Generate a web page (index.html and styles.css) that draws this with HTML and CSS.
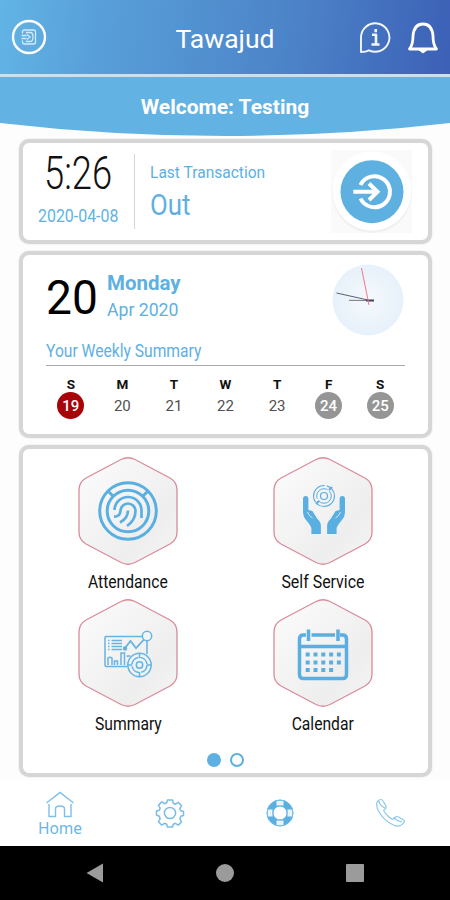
FILE: index.html
```
<!DOCTYPE html>
<html lang="en">
<head>
    <meta charset="UTF-8">
    <meta name="viewport" content="width=device-width, initial-scale=1.0">
    <title>Tawajud</title>
    <link rel="stylesheet" href="styles.css">
</head>
<body>
    <svg class="defs">
        <defs>
            <linearGradient id="hexFill" x1="0" y1="0" x2="1" y2="1">
                <stop offset="0" stop-color="#fcfcfc"/>
                <stop offset=".45" stop-color="#f3f3f3"/>
                <stop offset=".7" stop-color="#eeeeee"/>
                <stop offset="1" stop-color="#f5f5f5"/>
            </linearGradient>
            <symbol id="hex" viewBox="0 0 100 108">
                <path d="M43 2.5Q50 -1 57 2.5L92 21Q99 25 99 33V75Q99 83 92 87L57 105.5Q50 109 43 105.5L8 87Q1 83 1 75V33Q1 25 8 21Z" fill="url(#hexFill)" stroke="#d98c99" stroke-width="1.3"/>
            </symbol>
        </defs>
    </svg>
    <div class="app">
        <header class="header">
            <svg class="logout" width="36" height="36" viewBox="0 0 36 36" fill="none" stroke="#fff">
                <circle cx="18" cy="18" r="16" stroke-width="2.4"/>
                <path d="M11.500 14.500V13q0-2 2-2h9q2 0 2 2v10q0 2-2 2h-9q-2 0-2-2v-1.500M10.500 16.500h5M10.500 19.500h5M15.500 14.500v-1h4q2.500 0 2.500 4.500t-2.500 4.500h-4v-1M16 15.500l3 2.500-3 2.500" stroke="#d4eafa" stroke-width="1.3"/>
            </svg>
            <h1 class="title"><span>Tawajud</span></h1>
            <div class="header-icons">
                <svg width="32" height="33" viewBox="0 0 32 33" fill="none" stroke="#f2f6ff" stroke-width="1.900" stroke-linejoin="round">
                    <path d="M2 31V16.500A14.200 14.200 0 1 1 10 29.300Q7 31 2 31Z"/>
                    <path d="M13 13.800h4v9.500M12.500 23.500h8M16.700 8v3.200" stroke-width="2.600"/>
                </svg>
                <svg width="32" height="33" viewBox="0 0 32 33" fill="none" stroke="#fff" stroke-width="2.800" stroke-linejoin="round">
                    <path d="M2.500 28Q6 24 6 15Q7 3 16 3T26 15Q26 24 29.500 28Z"/>
                    <path d="M12 29h8l-4 3z" fill="#fff" stroke-width="1"/>
                </svg>
            </div>
        </header>
        <div class="welcome"><span>Welcome: Testing</span></div>

        <main>
            <section class="card transaction">
                <div class="time-box">
                    <div class="time"><span>5:26</span></div>
                    <div class="date"><span>2020-04-08</span></div>
                </div>
                <div class="last">
                    <div class="last-label"><span>Last Transaction</span></div>
                    <div class="last-value"><span>Out</span></div>
                </div>
                <svg class="out-icon" width="81" height="83" viewBox="0 0 81 83" fill="none">
                    <path d="M0 0H81V83H0Z" fill="#fafafa"/>
                    <circle cx="41" cy="43" r="40" fill="#f1f1f1"/>
                    <circle cx="41" cy="41" r="39.500" fill="#fff"/>
                    <circle cx="41" cy="41.700" r="31.500" fill="#5eb0e1"/>
                    <g stroke="#fff" stroke-width="4">
                        <path d="M29.500 35A15.500 15.500 0 1 1 29.500 48.500"/>
                        <path d="M22.300 41.700H46M38 33.500L46.500 41.700L38 50"/>
                    </g>
                </svg>
            </section>

            <section class="card week">
                <div class="week-top">
                    <div class="day-number"><span>20</span></div>
                    <div class="day">
                        <div class="day-name"><span>Monday</span></div>
                        <div class="month"><span>Apr 2020</span></div>
                    </div>
                    <svg class="clock" width="72" height="72" viewBox="0 0 72 72" fill="none">
                        <defs>
                            <radialGradient id="face">
                                <stop offset="0" stop-color="#f5f9fc"/>
                                <stop offset="1" stop-color="#e7f1fa"/>
                            </radialGradient>
                        </defs>
                        <circle cx="36" cy="36" r="35.500" fill="url(#face)"/>
                        <path d="M4.500 29L36 36" stroke="#59606c"/>
                        <path d="M17 36.300L42 36.500" stroke="#70757f"/>
                        <path d="M34 36.500H42" stroke="#404560" stroke-width="2"/>
                        <path d="M29.500 4L37 41" stroke="#f5788c"/>
                    </svg>
                </div>
                <h2 class="week-title"><span>Your Weekly Summary</span></h2>
                <ul class="days">
                    <li><b>S</b><i class="absent">19</i></li>
                    <li><b>M</b><i>20</i></li>
                    <li><b>T</b><i>21</i></li>
                    <li><b>W</b><i>22</i></li>
                    <li><b>T</b><i>23</i></li>
                    <li><b>F</b><i class="off">24</i></li>
                    <li><b>S</b><i class="off">25</i></li>
                </ul>
            </section>

            <section class="card menu">
                <div class="menu-grid">
                    <a class="item">
                        <svg width="100" height="108" viewBox="0 0 100 108" fill="none" stroke="#5aafe2" stroke-width="3">
                            <use href="#hex" width="100" height="108" stroke="none"/>
                            <circle cx="50" cy="54" r="28.300"/>
                            <circle cx="50" cy="54" r="20.800"/>
                            <path d="M30 34l5 5M70 34l-5 5"/>
                            <path d="M36.500 53A13.500 13.500 0 0 1 63.500 54V61M36 59.500Q42 60 42.500 54A7.500 7.500 0 0 1 57.500 54Q57.500 63 49 69M42 65.500Q50 61 50 53.500" stroke-width="2.700"/>
                        </svg>
                        <span>Attendance</span>
                    </a>
                    <a class="item">
                        <svg width="100" height="108" viewBox="0 0 100 108" fill="none" stroke="#5aafe2">
                            <use href="#hex" width="100" height="108" stroke="none"/>
                            <circle cx="51" cy="39" r="10.500" stroke-width="1.100" stroke-dasharray="24 2"/>
                            <circle cx="51" cy="39" r="7.300" stroke-dasharray="18 2"/>
                            <circle cx="51" cy="39" r="3.500" stroke-width="1.200"/>
                            <path d="M56 33l3-3M46 44l-3 3" stroke-width="2"/>
                            <g fill="#5aafe2" stroke="none">
                                <path d="M30 42q0-3 2.700-3t2.700 3v11l4 1 5 8q3.500 3 3.500 7v8h-9.500v-6q-1-3-5-7.500-3.400-4-3.400-8Z"/>
                                <path d="M72 42q0-3-2.700-3t-2.700 3v11l-4 1-5 8q-3.500 3-3.500 7v8h9.500v-6q1-3 5-7.500 3.400-4 3.400-8Z"/>
                            </g>
                            <path d="M34.500 55q1.500 4 5 6M67.500 55q-1.500 4-5 6" stroke="#d5e9f6"/>
                        </svg>
                        <span class="wide">Self Service</span>
                    </a>
                    <a class="item">
                        <svg width="100" height="108" viewBox="0 0 100 108" fill="none" stroke="#67b3e2" stroke-width="1.500">
                            <use href="#hex" width="100" height="108" stroke="none"/>
                            <path d="M64 37.500H28q-1 0-1 1V66q0 1.500 1.500 1.500H49M69 42v13"/>
                            <path d="M33.500 41.500H44M33.500 44.500H44M33.500 47.500H44M33.500 50.500H44M30 41.500h1.500M30 44.500h1.500M30 47.500h1.500M30 50.500h1.500"/>
                            <path d="M47 49l5.500-7 5.500 7L66.500 40" stroke-width="1.800"/>
                            <circle cx="47" cy="49.500" r="1.500" fill="#67b3e2"/>
                            <circle cx="69" cy="37" r="4.700" fill="#f1f5f8"/>
                            <path d="M30 66v-7q2-1.500 4 0v7M36.500 66v-4h3v4M43 66V54h3.500v12M49.500 58v-1h3"/>
                            <circle cx="61.500" cy="66" r="11.700" fill="#eef3f6"/>
                            <circle cx="61.500" cy="66" r="7.500" stroke-dasharray="10 2"/>
                            <circle cx="61.500" cy="66" r="3.200"/>
                            <path d="M61.500 54v5M61.500 73v5M50 66h4M69 66h4"/>
                        </svg>
                        <span>Summary</span>
                    </a>
                    <a class="item">
                        <svg width="100" height="108" viewBox="0 0 100 108" fill="none" stroke="#5aafe2">
                            <use href="#hex" width="100" height="108" stroke="none"/>
                            <path d="M33 36h-2.500q-4 0-4 4v35.500q0 4 4 4h39q4 0 4-4V40q0-4-4-4H67M38.500 36H62M26 47.500h48" stroke-width="3.500"/>
                            <path d="M35.500 30.500v11.500M65 30.500v11.500" stroke-width="3.500"/>
                            <path d="M32.700 55.500H68.700M32.700 63.500H68.700M32.700 71H60.700" stroke-width="4" stroke-dasharray="4 3.800"/>
                        </svg>
                        <span>Calendar</span>
                    </a>
                </div>
                <div class="dots"><i class="active"></i><i></i></div>
            </section>
        </main>

        <nav class="tabs">
            <a class="tab home">
                <svg width="30" height="28" viewBox="0 0 30 28" fill="none" stroke="#7dbfe9" stroke-width="1.400">
                    <path d="M1.500 12L15 1.500L28.500 12M4 13v12.500h6.500V18q0-3 4.500-3t4.500 3v7.500H26V13"/>
                </svg>
                <span>Home</span>
            </a>
            <a class="tab">
                <svg width="30" height="30" viewBox="0 0 30 30" fill="none" stroke="#79bce8" stroke-width="1.500" stroke-linejoin="round">
                    <path d="M12.500 2h5l.8 3.300 2.100.9 2.900-1.800 3.300 3.300-1.800 2.900.9 2.100 2.800.8v4l-2.800.8-.9 2.600 1.800 2.900-3.300 3.300-2.900-1.800-2.100.9-.8 2.800h-5l-.8-2.800-2.100-.9-2.900 1.800-3.300-3.300 1.800-2.900-.9-2.600L1.500 17v-4l2.800-.8.9-2.100-1.800-2.900 3.300-3.300 2.900 1.800 2.100-.9z"/>
                    <circle cx="15" cy="15" r="5.600"/>
                </svg>
            </a>
            <a class="tab">
                <svg width="30" height="30" viewBox="0 0 30 30" fill="none">
                    <circle cx="15" cy="15" r="10" stroke="#5aafe2" stroke-width="6.500"/>
                    <path d="M15 2.500v5M15 22.500v5M2.500 15h5M22.500 15h5" stroke="#e8f4fc" stroke-width="7"/>
                    <circle cx="15" cy="15" r="13" stroke="#72b9e6"/>
                    <circle cx="15" cy="15" r="7" stroke="#72b9e6"/>
                </svg>
            </a>
            <a class="tab">
                <svg width="30" height="30" viewBox="0 0 30 30" fill="none" stroke="#8cc8ed" stroke-width="1.200" stroke-linejoin="round">
                    <path d="M3 3Q6 0 8 3l3 5q1 2-2 4-1 1 4 6 4 4 5.500 3l2-2q1.500-1 3 0l5 3q2 1 0 3-4 5-10 2Q9 23 3.500 13 0 6 3 3ZM4 3q0 4 6 7M19 19q2 4 8 5"/>
                </svg>
            </a>
        </nav>

        <footer class="android">
            <svg width="20" height="22" viewBox="0 0 20 22"><path d="M18 1.500V20.500L1.500 11Z" fill="#9b9b9b"/></svg>
            <svg width="20" height="22" viewBox="0 0 20 22"><circle cx="10" cy="11" r="9" fill="#9b9b9b"/></svg>
            <svg width="20" height="22" viewBox="0 0 20 22"><rect x="1" y="2" width="18" height="18" rx="1" fill="#9b9b9b"/></svg>
        </footer>
    </div>
</body>
</html>
```

FILE: styles.css
```
*{
    margin: 0;
    padding: 0;
    box-sizing: border-box;
}
body{
    font-family: Roboto, "Liberation Sans", sans-serif;
    background: #fdfdfd;
    color: #111;
}
svg{
    display: block;
}
.defs{
    width: 0;
    height: 0;
    position: absolute;
}
.app{
    width: 450px;
    height: 900px;
    overflow: hidden;
    display: flex;
    flex-direction: column;
}
.app span{
    display: inline-block;
    white-space: nowrap;
    transform-origin: left center;
}
.header{
    height: 77px;
    display: grid;
    grid-template-columns: 100px 1fr 100px;
    align-items: center;
    padding-left: 11px;
    padding-right: 11px;
    background: linear-gradient(97deg, #62b4e5 0%, #589fd9 22%, #4c83c8 65%, #3c60b6 100%);
    border-bottom: 3px solid #c5e2f5;
}
.title{
    font-size: 26.5px;
    font-weight: 400;
    line-height: 30px;
    text-align: center;
    color: #fff;
    padding-top: 4px;
}
.header-icons{
    display: flex;
    gap: 16px;
    justify-content: flex-end;
}
.welcome{
    height: 59px;
    background: #62b3e4;
    clip-path: path('M0 0H450V46Q225 72 0 46Z');
    color: #fff;
    font-size: 21px;
    font-weight: 700;
    line-height: 61px;
    text-align: center;
}
main{
    padding: 3px 18px 0 19px;
    display: flex;
    flex-direction: column;
    gap: 7px;
}
.card{
    border: 4px solid #d6d6d6;
    border-radius: 10px;
    background: #fff;
    box-shadow: 0 0 2px #ddd;
}
.transaction{
    height: 105px;
    display: flex;
}
.time-box{
    width: 112px;
    height: 75px;
    margin-top: 11px;
    padding-left: 15px;
    border-right: 1px solid #d5d5d5;
}
.time{
    height: 46px;
    font-size: 46px;
    font-weight: 300;
    line-height: 39px;
    padding-left: 6px;
}
.time span{
    transform: scaleX(.79);
}
.date{
    font-size: 18px;
    line-height: 31px;
    color: #62b3e4;
}
.date span{
    transform: scaleX(.885);
}
.last{
    width: 181px;
    padding: 18px 0 0 15px;
    color: #5eb0e2;
}
.last-label{
    font-size: 17px;
    line-height: 23px;
}
.last-label span{
    transform: scaleX(.915);
}
.last-value{
    font-size: 29px;
    line-height: 42px;
}
.last-value span{
    transform: scaleX(.89);
}
.out-icon{
    margin: 7px 0 0 15px;
}
.week{
    height: 187px;
    padding: 9px 23px 0;
}
.week-top{
    height: 72px;
    display: flex;
}
.day-number{
    width: 61px;
    font-size: 48px;
    line-height: 67px;
    color: #000;
}
.day-number span{
    transform: scaleX(.96);
}
.day{
    width: 225px;
    padding-top: 6px;
    color: #5eb0e2;
}
.day-name{
    font-size: 20.5px;
    font-weight: 700;
    line-height: 27px;
}
.month{
    font-size: 18px;
    line-height: 26px;
}
.month span{
    transform: scaleX(.98);
}
.week-title{
    height: 30px;
    font-size: 18px;
    font-weight: 400;
    line-height: 30px;
    color: #5eb0e2;
    border-bottom: 1px solid #aaa;
}
.week-title span{
    transform: scaleX(.868);
}
.days{
    display: grid;
    grid-template-columns: repeat(7, 1fr);
    list-style: none;
    margin: 0 -1px;
    padding-top: 10px;
}
.days li{
    display: flex;
    flex-direction: column;
    align-items: center;
}
.days b{
    font-size: 13.5px;
    line-height: 16px;
}
.days i{
    width: 27px;
    height: 27px;
    border-radius: 50%;
    font-size: 15px;
    font-style: normal;
    line-height: 28px;
    text-align: center;
    color: #505050;
}
.days .absent, .days .off{
    color: #fff;
    font-weight: 500;
}
.days .absent{
    background: #a80309;
}
.days .off{
    background: #959595;
}
.menu{
    height: 332px;
    padding-top: 8px;
}
.menu-grid{
    width: 390px;
    margin: 0 auto;
    display: grid;
    grid-template-columns: 1fr 1fr;
    grid-auto-rows: 142px;
}
.item{
    display: flex;
    flex-direction: column;
    align-items: center;
    font-size: 18px;
    line-height: 33px;
}
.item span{
    transform: scaleX(.87);
    transform-origin: center;
}
.item .wide{
    transform: scaleX(.885);
}
.dots{
    display: flex;
    justify-content: center;
    gap: 9px;
    padding-top: 12px;
}
.dots i{
    width: 14px;
    height: 14px;
    border: 2px solid #5eb0e2;
    border-radius: 50%;
}
.dots .active{
    background: #5eb0e2;
}
.tabs{
    height: 66px;
    margin-top: 3px;
    padding: 0 5px;
    display: grid;
    grid-template-columns: repeat(4, 1fr);
    background: #fff;
}
.tab{
    display: flex;
    flex-direction: column;
    align-items: center;
    justify-content: center;
}
.home{
    padding-top: 2px;
}
.tab span{
    font-family: "Noto Sans", sans-serif;
    font-size: 15.5px;
    line-height: 19px;
    color: #6ab5e5;
}
.android{
    height: 54px;
    background: #000;
    display: flex;
    justify-content: center;
    align-items: center;
    gap: 110px;
}
```
